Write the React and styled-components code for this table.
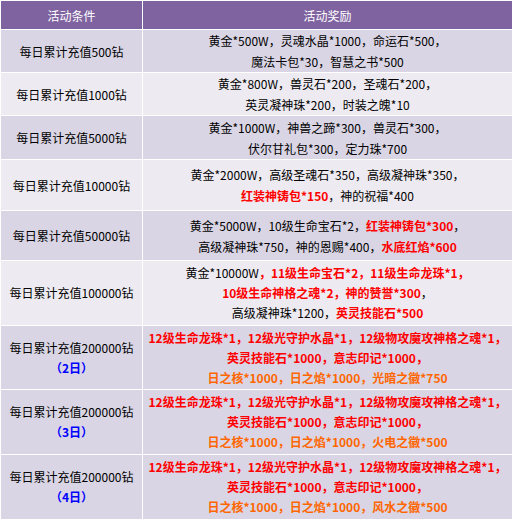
import styled, { createGlobalStyle } from "styled-components";

const GlobalStyle = createGlobalStyle`
  html, body {
    margin: 0;
    padding: 0;
    background: #ffffff;
  }
  body {
    font-family: "Noto Sans CJK SC", "Noto Sans", sans-serif;
    font-size: 12px;
  }
`;

const Table = styled.div`
  display: grid;
  grid-template-columns: 141px 369px;
  gap: 1px;
  padding: 1px 1px 0 1px;
  width: 513px;
  box-sizing: border-box;
  background: #ffffff;
`;

const HeadCell = styled.div`
  height: 28px;
  display: flex;
  align-items: center;
  justify-content: center;
  background: #7f63a1;
  color: #ffffff;
  font-size: 12px;
`;

const Cell = styled.div`
  height: ${(p) => p.$h}px;
  display: flex;
  flex-direction: column;
  align-items: center;
  justify-content: center;
  background: ${(p) => (p.$light ? "#edebf1" : "#d9d5e4")};
  color: #000000;
  line-height: ${(p) => p.$lh}px;
  white-space: nowrap;
`;

const Line = styled.div`
  text-align: center;
`;

const Days = styled.div`
  color: #0000ff;
  font-weight: bold;
`;

const Seg = styled.span`
  color: ${(p) => (p.$c === "r" ? "#ff0000" : p.$c === "o" ? "#ff6600" : "#000000")};
  font-weight: ${(p) => (p.$c ? "bold" : "normal")};
`;

const hiRows = (last) => [
  [["12级生命龙珠*1，12级光守护水晶*1，12级物攻魔攻神格之魂*1，", "r"]],
  [["英灵技能石*1000，意志印记*1000，", "r"]],
  [["日之核*1000，日之焰*1000，" + last, "o"]],
];

const rows = [
  {
    cond: "每日累计充值500钻",
    h: 42,
    lines: [[["黄金*500W，灵魂水晶*1000，命运石*500，"]], [["魔法卡包*30，智慧之书*500"]]],
  },
  {
    cond: "每日累计充值1000钻",
    h: 42,
    light: true,
    lines: [[["黄金*800W，兽灵石*200，圣魂石*200，"]], [["英灵凝神珠*200，时装之魄*10"]]],
  },
  {
    cond: "每日累计充值5000钻",
    h: 43,
    lines: [[["黄金*1000W，神兽之蹄*300，兽灵石*300，"]], [["伏尔甘礼包*300，定力珠*700"]]],
  },
  {
    cond: "每日累计充值10000钻",
    h: 50,
    light: true,
    lines: [
      [["黄金*2000W，高级圣魂石*350，高级凝神珠*350，"]],
      [["红装神铸包*150", "r"], ["，神的祝福*400"]],
    ],
  },
  {
    cond: "每日累计充值50000钻",
    h: 49,
    lines: [
      [["黄金*5000W，10级生命宝石*2，"], ["红装神铸包*300", "r"], ["，"]],
      [["高级凝神珠*750，神的恩赐*400，"], ["水底红焰*600", "r"]],
    ],
  },
  {
    cond: "每日累计充值100000钻",
    h: 64,
    lh: 20,
    light: true,
    lines: [
      [["黄金*10000W"], ["，11级生命宝石*2，11级生命龙珠*1，", "r"]],
      [["10级生命神格之魂*2，神的赞誉*300", "r"], ["，"]],
      [["高级凝神珠*1200，"], ["英灵技能石*500", "r"]],
    ],
  },
  { cond: "每日累计充值200000钻", days: "（2日）", h: 63, lh: 20, lines: hiRows("光暗之徽*750") },
  { cond: "每日累计充值200000钻", days: "（3日）", h: 64, lh: 20, lines: hiRows("火电之徽*500") },
  { cond: "每日累计充值200000钻", days: "（4日）", h: 64, lh: 20, lines: hiRows("风水之徽*500") },
];

export default function App() {
  return (
    <>
      <GlobalStyle />
      <Table>
        <HeadCell>活动条件</HeadCell>
        <HeadCell>活动奖励</HeadCell>
        {rows.map((row, i) => [
          <Cell key={`c${i}`} $h={row.h} $lh={row.lh || 21} $light={row.light}>
            <Line>{row.cond}</Line>
            {row.days && <Days>{row.days}</Days>}
          </Cell>,
          <Cell key={`r${i}`} $h={row.h} $lh={row.lh || 21} $light={row.light}>
            {row.lines.map((segs, j) => (
              <Line key={j}>
                {segs.map(([t, c], k) => (
                  <Seg key={k} $c={c}>
                    {t}
                  </Seg>
                ))}
              </Line>
            ))}
          </Cell>,
        ])}
      </Table>
    </>
  );
}
